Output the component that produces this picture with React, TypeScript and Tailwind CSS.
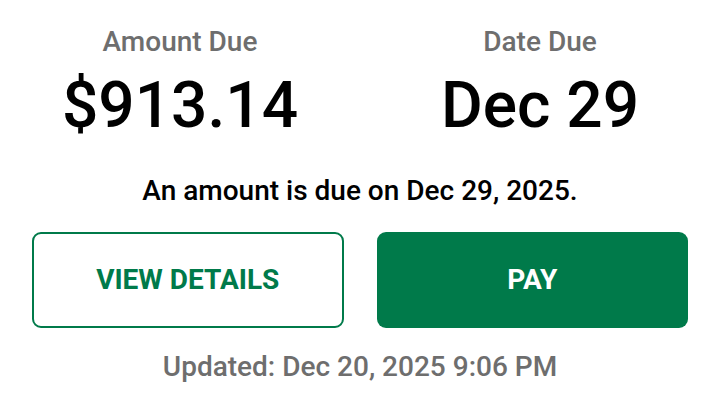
import React from 'react'

const Stat = ({ label, value }: { label: string; value: string }) => (
  <div className="flex flex-col items-center">
    <p className="text-[28px] font-medium leading-none text-[#6e6e6e]">{label}</p>
    <p className="mt-[18px] text-[64px] font-medium leading-none text-black">{value}</p>
  </div>
)

export default function App() {
  return (
    <div className="flex h-[405px] w-[720px] flex-col bg-white font-['Roboto',sans-serif]">
      <div className="grid grid-cols-2 pt-[28px]">
        <Stat label="Amount Due" value="$913.14" />
        <Stat label="Date Due" value="Dec 29" />
      </div>
      <p className="mt-[39px] text-center text-[28px] font-medium leading-none text-black">
        An amount is due on Dec 29, 2025.
      </p>
      <div className="mt-[27px] grid grid-cols-2 gap-[33px] px-[32px]">
        <button className="flex h-[96px] items-center justify-center rounded-[9px] border-2 border-[#007a4a] bg-white text-[28px] font-bold text-[#007a4a]">
          VIEW DETAILS
        </button>
        <button className="flex h-[96px] items-center justify-center rounded-[9px] bg-[#007a4a] text-[28px] font-bold text-white">
          PAY
        </button>
      </div>
      <p className="mt-[25px] text-center text-[28px] font-medium leading-none text-[#6e6e6e]">
        Updated: Dec 20, 2025 9:06 PM
      </p>
    </div>
  )
}
